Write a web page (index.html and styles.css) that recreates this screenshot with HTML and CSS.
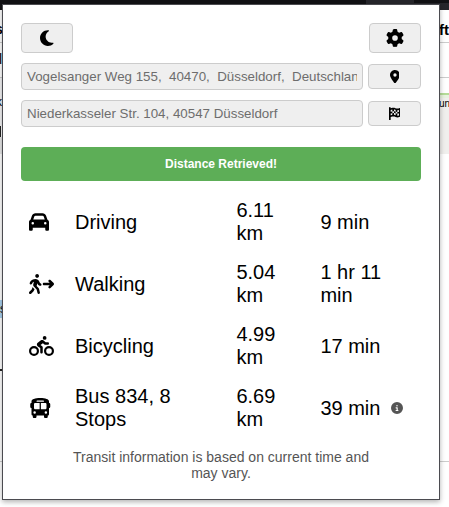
FILE: index.html
```
<!DOCTYPE html>
<html lang="en">
<head>
<meta charset="utf-8">
<title>Distance</title>
<link rel="stylesheet" href="styles.css">
</head>
<body>
<div class="page">
  <div class="browser-bar"><span class="tab"></span><span class="tab-end"></span></div>
  <div class="columns">
    <div class="col left">
      <div class="frag l1">s</div>
      <div class="frag l2">l</div>
      <div class="frag l3">k</div>
      <div class="frag l4"></div>
      <div class="frag l5"></div>
      <div class="frag l6">s</div>
      <div class="frag l7"></div>
    </div>
    <div class="col right">
      <div class="frag r1">ft</div>
      <div class="frag r2"></div>
      <div class="frag r3">un</div>
      <div class="frag r4"></div>
    </div>
  </div>
</div>
<main class="popup">
  <header class="bar">
    <button class="btn" aria-label="Dark mode"><svg class="i18" viewBox="0 0 384 512"><path d="M223.5 32C100 32 0 132.3 0 256S100 480 223.5 480c60.6 0 115.5-24.2 155.8-63.4c5-4.9 6.3-12.5 3.1-18.7s-10.1-9.7-17-8.5c-9.8 1.7-19.8 2.6-30.1 2.6c-96.9 0-175.5-78.8-175.5-176c0-65.8 36-123.1 89.3-153.3c6.1-3.5 9.2-10.5 7.7-17.3s-7.3-11.9-14.3-12.5c-6.3-.5-12.6-.8-19-.8z"/></svg></button>
    <button class="btn" aria-label="Settings"><svg class="i18" viewBox="0 0 512 512"><path d="M495.9 166.6c3.2 8.7 .5 18.4-6.4 24.6l-43.3 39.4c1.1 8.3 1.7 16.8 1.7 25.4s-.6 17.1-1.7 25.4l43.3 39.4c6.9 6.2 9.6 15.9 6.4 24.6c-4.4 11.9-9.7 23.3-15.8 34.3l-4.7 8.1c-6.6 11-14 21.4-22.1 31.2c-5.9 7.2-15.7 9.6-24.5 6.8l-55.7-17.7c-13.4 10.3-28.2 18.9-44 25.4l-12.5 57.1c-2 9.1-9 16.3-18.2 17.8c-13.8 2.3-28 3.5-42.5 3.5s-28.7-1.2-42.5-3.5c-9.2-1.5-16.2-8.7-18.2-17.8l-12.5-57.1c-15.8-6.5-30.6-15.1-44-25.4L83.1 425.9c-8.8 2.8-18.6 .3-24.5-6.8c-8.1-9.8-15.5-20.2-22.1-31.2l-4.7-8.1c-6.1-11-11.4-22.4-15.8-34.3c-3.2-8.7-.5-18.4 6.4-24.6l43.3-39.4C64.6 273.1 64 264.6 64 256s.6-17.1 1.7-25.4L22.4 191.2c-6.9-6.2-9.6-15.9-6.4-24.6c4.4-11.9 9.7-23.3 15.8-34.3l4.7-8.1c6.6-11 14-21.4 22.1-31.2c5.9-7.2 15.7-9.6 24.5-6.8l55.7 17.7c13.4-10.3 28.2-18.9 44-25.4l12.5-57.1c2-9.1 9-16.3 18.2-17.8C227.3 1.2 241.5 0 256 0s28.7 1.2 42.5 3.5c9.2 1.5 16.2 8.7 18.2 17.8l12.5 57.1c15.8 6.5 30.6 15.1 44 25.4l55.7-17.7c8.8-2.8 18.6-.3 24.5 6.8c8.1 9.8 15.5 20.2 22.1 31.2l4.7 8.1c6.1 11 11.4 22.4 15.8 34.3zM256 336a80 80 0 1 0 0-160 80 80 0 1 0 0 160z"/></svg></button>
  </header>
  <div class="field">
    <div class="input">Vogelsanger Weg 155,&nbsp; 40470,&nbsp; Düsseldorf,&nbsp; Deutschland</div>
    <button class="btn small" aria-label="Location"><svg class="i13" viewBox="0 0 384 512"><path d="M215.7 499.2C267 435 384 279.4 384 192C384 86 298 0 192 0S0 86 0 192c0 87.4 117 243 168.3 307.2c12.3 15.3 35.1 15.3 47.4 0zM192 128a64 64 0 1 1 0 128 64 64 0 1 1 0-128z"/></svg></button>
  </div>
  <div class="field">
    <div class="input">Niederkasseler Str. 104, 40547 Düsseldorf</div>
    <button class="btn small" aria-label="Destination"><svg class="i13" viewBox="0 0 448 512"><path d="M32 0C49.7 0 64 14.3 64 32V48l69-17.2c38.1-9.5 78.3-5.1 113.5 12.5c46.3 23.2 100.8 23.2 147.1 0l9.6-4.8C423.8 28.1 448 43.1 448 66.1V345.8c0 13.3-8.3 25.3-20.8 30l-34.7 13c-46.2 17.3-97.6 14.6-141.7-7.4c-37.9-19-81.3-23.7-122.5-13.4L64 384v96c0 17.7-14.3 32-32 32s-32-14.3-32-32V400 334 64 32C0 14.3 14.3 0 32 0zM64 187.1l64-13.9v65.5L64 252.6V318l48.8-12.2c5.1-1.3 10.1-2.4 15.2-3.3V238.7l38.9-8.4c8.3-1.8 16.7-2.5 25.1-2.1l0-64c13.6 .4 27.2 2.6 40.4 6.4l23.6 6.9v66.7l-41.7-12.3c-7.3-2.1-14.8-3.4-22.3-3.8v71.4c21.8 1.9 43.3 6.7 64 14.4V244.2l22.7 6.7c13.5 4 27.3 6.4 41.3 7.4V194c-7.8-.8-15.6-2.3-23.2-4.5l-40.8-12v-62c-13-3.8-25.8-8.8-38.2-15c-8.2-4.1-16.9-7-25.8-8.8v72.4c-13-.4-26 .8-38.7 3.6L128 173.2V98L64 114v73.1zM320 335.7c16.8 1.5 33.9-.7 50-6.8l14-5.2V251.9l-7.9 1.8c-18.4 4.3-37.3 5.7-56.1 4.5v77.4zm64-149.4V115.4c-20.9 6.1-42.4 9.1-64 9.1V194c13.9 1.4 28 .5 41.7-2.6l22.3-5.2z"/></svg></button>
  </div>
  <div class="status">Distance Retrieved!</div>
  <section class="results">
    <div class="row">
      <svg class="i20" viewBox="0 0 512 512"><path d="M135.2 117.4L109.1 192H402.9l-26.1-74.6C372.3 104.6 360.2 96 346.6 96H165.4c-13.6 0-25.7 8.6-30.2 21.4zM39.6 196.8L74.8 96.3C88.3 57.8 124.6 32 165.4 32H346.6c40.8 0 77.1 25.8 90.6 64.3l35.2 100.5c23.2 9.6 39.6 32.5 39.6 59.2V400v48c0 17.7-14.3 32-32 32H448c-17.7 0-32-14.3-32-32V400H96v48c0 17.7-14.3 32-32 32H32c-17.7 0-32-14.3-32-32V400 256c0-26.7 16.4-49.6 39.6-59.2zM128 288a32 32 0 1 0-64 0 32 32 0 1 0 64 0zm288 32a32 32 0 1 0 0-64 32 32 0 1 0 0 64z"/></svg>
      <span>Driving</span><span>6.11<br>km</span><span>9 min</span>
    </div>
    <div class="row">
      <svg class="i20" viewBox="0 0 640 512"><path d="M208 96c26.5 0 48-21.5 48-48S234.5 0 208 0s-48 21.5-48 48s21.5 48 48 48zM123.7 200.5c1-.4 1.9-.8 2.9-1.2l-16.9 63.5c-5.6 21.1-.1 43.6 14.7 59.7l70.7 77.1 22 88.1c4.3 17.1 21.7 27.6 38.8 23.3s27.6-21.7 23.3-38.8l-23-92.1c-1.9-7.8-5.8-14.9-11.2-20.8l-49.5-54 19.3-65.5 9.6 23c4.4 10.6 12.5 19.3 22.8 24.5l26.7 13.3c15.8 7.9 35 1.5 42.9-14.3s1.5-35-14.3-42.9L281 232.7l-15.3-36.8C248.5 154.8 208.3 128 163.7 128c-22.8 0-45.3 4.8-66.1 14l-8 3.5c-32.9 14.6-58.1 42.4-69.4 76.5l-2.6 7.8c-5.6 16.8 3.5 34.9 20.2 40.5s34.9-3.5 40.5-20.2l2.6-7.8c5.7-17.1 18.3-30.9 34.7-38.2l8-3.5zm-30 135.1L68.7 398 9.4 457.4c-12.5 12.5-12.5 32.8 0 45.3s32.8 12.5 45.3 0l62.3-62.3c4.6-4.6 8.2-10.1 10.6-16.1l14.5-36.2-40.7-44.4c-2.5-2.7-4.8-5.6-7-8.6zM550.6 153.4c-12.5-12.5-32.8-12.5-45.3 0s-12.5 32.8 0 45.3L530.7 224H384c-17.7 0-32 14.3-32 32s14.3 32 32 32H530.7l-25.4 25.4c-12.5 12.5-12.5 32.8 0 45.3s32.8 12.5 45.3 0l80-80c12.5-12.5 12.5-32.8 0-45.3l-80-80z"/></svg>
      <span>Walking</span><span>5.04<br>km</span><span>1 hr 11<br>min</span>
    </div>
    <div class="row">
      <svg class="i20" viewBox="0 0 640 512"><path d="M400 96a48 48 0 1 0 0-96 48 48 0 1 0 0 96zm27.2 64l-61.8-48.8c-17.3-13.6-41.7-13.8-59.1-.3l-83.1 64.2c-30.7 23.8-28.5 70.8 4.3 91.6L288 305.1V416c0 17.7 14.3 32 32 32s32-14.3 32-32V288c0-10.7-5.3-20.7-14.2-26.6L295 232.9l60.3-48.5L396 217c5.7 4.5 12.7 7 20 7h64c17.7 0 32-14.3 32-32s-14.3-32-32-32H427.2zM56 384a72 72 0 1 1 144 0A72 72 0 1 1 56 384zm200 0A128 128 0 1 0 0 384a128 128 0 1 0 256 0zm184 0a72 72 0 1 1 144 0 72 72 0 1 1-144 0zm200 0a128 128 0 1 0-256 0 128 128 0 1 0 256 0z"/></svg>
      <span>Bicycling</span><span>4.99<br>km</span><span>17 min</span>
    </div>
    <div class="row">
      <svg class="i20" viewBox="0 0 576 512"><path d="M288 0C422.4 0 512 35.2 512 80V96l0 32c17.7 0 32 14.3 32 32v64c0 17.7-14.3 32-32 32l0 160c0 17.7-14.3 32-32 32v32c0 17.7-14.3 32-32 32H416c-17.7 0-32-14.3-32-32V448H192v32c0 17.7-14.3 32-32 32H128c-17.7 0-32-14.3-32-32l0-32c-17.7 0-32-14.3-32-32l0-160c-17.7 0-32-14.3-32-32V160c0-17.7 14.3-32 32-32h0V96h0V80C64 35.2 153.6 0 288 0zM128 160v96c0 17.7 14.3 32 32 32H272V128H160c-17.7 0-32 14.3-32 32zM304 288H416c17.7 0 32-14.3 32-32V160c0-17.7-14.3-32-32-32H304V288zM144 400a32 32 0 1 0 0-64 32 32 0 1 0 0 64zm288 0a32 32 0 1 0 0-64 32 32 0 1 0 0 64zM384 80c0-8.8-7.2-16-16-16H208c-8.8 0-16 7.2-16 16s7.2 16 16 16H368c8.8 0 16-7.2 16-16z"/></svg>
      <span>Bus 834, 8<br>Stops</span><span>6.69<br>km</span><span class="time">39 min<svg class="info" viewBox="0 0 512 512"><path d="M256 512A256 256 0 1 0 256 0a256 256 0 1 0 0 512zM216 336h24V272H216c-13.3 0-24-10.7-24-24s10.7-24 24-24h48c13.3 0 24 10.7 24 24v88h8c13.3 0 24 10.7 24 24s-10.7 24-24 24H216c-13.3 0-24-10.7-24-24s10.7-24 24-24zm40-208a32 32 0 1 1 0 64 32 32 0 1 1 0-64z"/></svg></span>
    </div>
  </section>
  <p class="note">Transit information is based on current time and<br>may vary.</p>
</main>
</body>
</html>
```
FILE: styles.css
```
* { box-sizing: border-box; }
body {
  margin: 0;
  width: 449px;
  height: 507px;
  overflow: hidden;
  position: relative;
  background: #fff;
  color: #000;
  font-family: "Liberation Sans", Arial, sans-serif;
}
.browser-bar {
  display: flex;
  justify-content: space-between;
  height: 10px;
  background: #26262b;
}
.tab { width: 366px; background: #111114; }
.tab-end { width: 35px; height: 3px; background: #111114; }
.columns { display: flex; justify-content: space-between; }
.col { display: flex; flex-direction: column; overflow: hidden; height: 497px; }
.left { width: 3px; }
.right { width: 10px; }
.frag { flex: none; overflow: hidden; white-space: nowrap; font-size: 14px; }
.l1 { height: 33px; padding-top: 11px; margin-left: -5px; border-bottom: 1px solid #ccc; font-weight: bold; }
.l2 { height: 35px; padding-top: 8px; margin-left: -1px; border-bottom: 1px solid #ccc; }
.l3 { height: 48px; padding-top: 17px; margin-left: -4px; background: #f3f3f5; font-size: 12px; }
.l4 { height: 11px; width: 1px; background: #222; }
.l5 { height: 163px; background: linear-gradient(#e6e6e6 17px, #fff 17px); }
.l6 { height: 18px; padding: 2px 0 0 0; background: #a9d0ee; font-size: 12px; }
.l7 { height: 144px; width: 2px; border-bottom: 1px solid #ccc; background: linear-gradient(transparent 51px, #222 51px, #222 53px, transparent 53px); }
.r1 { height: 33px; padding: 11px 0 0 0; border-bottom: 1px solid #ccc; font-weight: bold; font-size: 15px; }
.r2 { height: 35px; border-bottom: 1px solid #ccc; }
.r3 { height: 61px; margin-top: 15px; padding-top: 3px; border-top: 2px solid #b5dc98; background: linear-gradient(#e8f3df 3px, #f0efed 3px); font-size: 10px; }
.r4 { height: 308px; border-bottom: 1px solid #ccc; }
.popup {
  position: absolute;
  left: 2px;
  top: 4px;
  width: 438px;
  height: 496px;
  padding: 18px;
  background: #fff;
  border: 1px solid #4b4b50;
  box-shadow: 0 2px 5px rgba(0, 0, 0, .3);
}
.bar { display: flex; justify-content: space-between; margin-bottom: 10px; }
.btn {
  display: flex;
  align-items: center;
  justify-content: center;
  width: 52px;
  height: 30px;
  padding: 0;
  background: #efefef;
  border: 1px solid #ccc;
  border-radius: 4px;
}
.small { width: 53px; height: 25px; }
.field { display: flex; align-items: center; gap: 5px; margin-bottom: 10px; }
.input {
  width: 342px;
  height: 27px;
  padding: 0 5px;
  line-height: 25px;
  font-size: 13.33px;
  white-space: nowrap;
  color: #6d6d6d;
  background: #efefef;
  border: 1px solid #ccc;
  border-radius: 4px;
  overflow: clip;
  overflow-clip-margin: content-box;
}
.status {
  height: 34px;
  margin-top: 20px;
  line-height: 34px;
  text-align: center;
  font-size: 12px;
  font-weight: bold;
  color: #fff;
  background: #5dae57;
  border-radius: 4px;
}
.i18 { height: 18px; }
.i13 { height: 13.33px; }
.i20 { height: 20px; }
.results { display: grid; gap: 16px; margin-top: 18px; padding-left: 8px; }
.row {
  display: grid;
  grid-template-columns: 46px 161.4px 84px 1fr;
  align-items: center;
  justify-items: start;
  height: 46px;
  font-size: 20px;
  line-height: 23px;
}
.time { display: flex; align-items: center; gap: 11px; }
.info { width: 12px; height: 12px; fill: #555; }
.note {
  margin: 18px 0 0;
  text-align: center;
  font-size: 14px;
  line-height: 16px;
  color: #555;
}
```
